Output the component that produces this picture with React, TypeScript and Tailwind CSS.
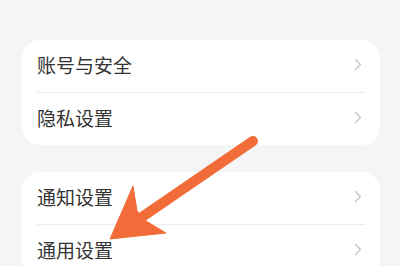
import React from "react";

const Chevron = () => (
  <svg width="8" height="13" viewBox="0 0 8 13" className="shrink-0">
    <polyline points="1.5,1.5 6.5,6.5 1.5,11.5" fill="none" stroke="#c3c3c3" strokeWidth="1.4" strokeLinecap="round" strokeLinejoin="round" />
  </svg>
);

const Row = ({ label, divider }: { label: string; divider?: boolean }) => (
  <div className="flex flex-col">
    {divider && <div className="mx-[15px] h-px bg-[#ececec]" />}
    <div className="flex h-[52px] items-center justify-between pb-[3px] pl-[15px] pr-[18px]">
      <span className="text-[19px] leading-none text-[#333333]">{label}</span>
      <Chevron />
    </div>
  </div>
);

export default function App() {
  return (
    <div
      className="relative h-[266px] w-[400px] overflow-hidden bg-[#f5f5f5]"
      style={{ fontFamily: '"Noto Sans CJK SC", "Noto Sans", sans-serif' }}
    >
      <div className="flex flex-col gap-[27px] px-[22px] pt-[40px] pr-[20px]">
        <div className="flex flex-col rounded-[18px] bg-white">
          <Row label="账号与安全" />
          <Row label="隐私设置" divider />
        </div>
        <div className="flex flex-col rounded-[18px] bg-white">
          <Row label="通知设置" />
          <Row label="通用设置" divider />
        </div>
      </div>
      <svg className="absolute left-0 top-0" width="400" height="266" viewBox="0 0 400 266">
        <line x1="253" y1="141" x2="142" y2="217" stroke="#f26c3a" strokeWidth="10" strokeLinecap="round" />
        <polygon points="110,239 133,186 137,211 146,221 166,233" fill="#f26c3a" strokeLinejoin="round" stroke="#f26c3a" strokeWidth="1" />
      </svg>
    </div>
  );
}
